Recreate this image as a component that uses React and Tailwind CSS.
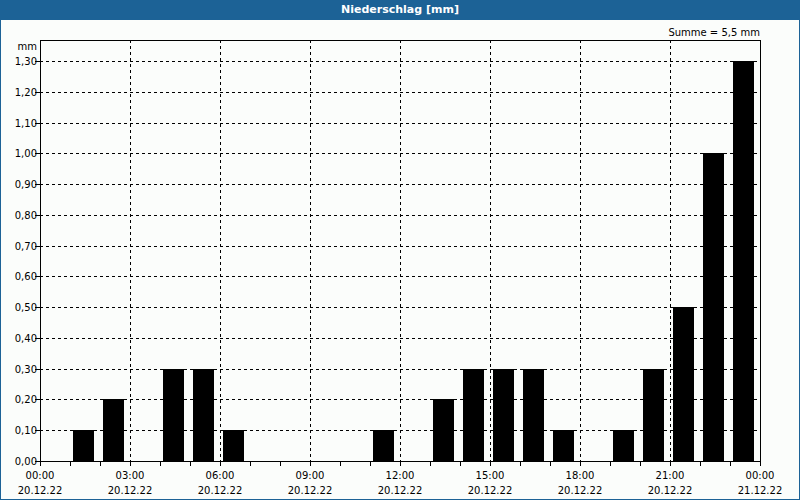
import React from "react";

const vals = {1:0.1,2:0.2,4:0.3,5:0.3,6:0.1,11:0.1,13:0.2,14:0.3,15:0.3,16:0.3,17:0.1,19:0.1,20:0.3,21:0.5,22:1.0,23:1.3};
const Y0 = 461, S = 400/13*10;
const y = v => Y0 - v*S;
const labels = ["00:00","03:00","06:00","09:00","12:00","15:00","18:00","21:00","00:00"];

export default function App() {
  const font = { fontFamily: '"DejaVu Sans", sans-serif', fontSize: 10 };
  return (
    <div className="w-[800px] h-[500px] bg-[#1c6296] flex flex-col" style={{fontFamily:'"DejaVu Sans", sans-serif'}}>
      <div className="h-[20px] flex items-center justify-center text-white font-bold text-[11px]">Niederschlag [mm]</div>
      <div className="flex-1 mx-px mb-px bg-[#fbfdfb] relative">
        <svg width="798" height="479" className="absolute left-0 top-0" style={font}>
          <g transform="translate(-1,-20)" shapeRendering="crispEdges">
            <text x="760" y="36" textAnchor="end">Summe = 5,5 mm</text>
            <text x="37" y="50" textAnchor="end">mm</text>
            {Array.from({length:14},(_,i)=>(
              <g key={i}>
                {i>0 && <line x1="40" x2="760" y1={Math.round(y(i/10))+0.5} y2={Math.round(y(i/10))+0.5} stroke="#000" strokeDasharray="3,3"/>}
                <line x1="35" x2="40" y1={Math.round(y(i/10))+0.5} y2={Math.round(y(i/10))+0.5} stroke="#000"/>
                <text x="37" y={Math.round(y(i/10))+4} textAnchor="end">{(i/10).toFixed(2).replace(".",",")}</text>
              </g>
            ))}
            {[1,2,3,4,5,6,7].map(i=>(
              <line key={i} x1={40+90*i+0.5} x2={40+90*i+0.5} y1="40" y2="461" stroke="#000" strokeDasharray="3,3"/>
            ))}
            {Array.from({length:25},(_,i)=>(
              <line key={i} x1={40+30*i+0.5} x2={40+30*i+0.5} y1="461" y2="466" stroke="#000"/>
            ))}
            {Object.entries(vals).map(([h,v])=>(
              <rect key={h} x={40+30*h+3} y={Math.round(y(v))} width="21" height={461-Math.round(y(v))} fill="#000"/>
            ))}
            <rect x="40.5" y="40.5" width="720" height="421" fill="none" stroke="#000"/>
            {labels.map((l,i)=>(
              <g key={i}>
                <text x={40+90*i} y="479" textAnchor="middle">{l}</text>
                <text x={40+90*i} y="494" textAnchor="middle">{i===8?"21.12.22":"20.12.22"}</text>
              </g>
            ))}
          </g>
        </svg>
      </div>
    </div>
  );
}
